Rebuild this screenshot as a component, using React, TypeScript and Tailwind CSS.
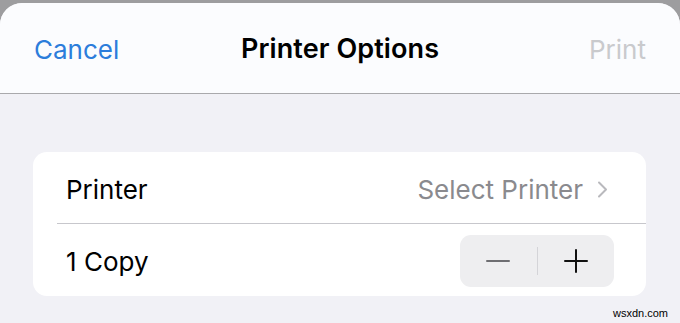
export default function App() {
  return (
    <div className="w-[680px] h-[323px] overflow-hidden bg-[#9d9d9f] pt-[3px]" style={{ fontFamily: "Inter, 'Liberation Sans', sans-serif" }}>
      <div className="h-full rounded-t-[22px] overflow-hidden bg-[#f1f1f6] flex flex-col">
        {/* nav bar */}
        <div className="h-[91px] shrink-0 bg-[#fbfcfe] border-b border-[#a9a9ac] flex items-center justify-between px-[34px] pt-[2px]">
          <span className="text-[26px] text-[#2c7ddb] w-[120px]">Cancel</span>
          <span className="text-[27px] font-semibold text-black tracking-[0.1px]">Printer Options</span>
          <span className="text-[26px] text-[#c9cacd] w-[120px] text-right">Print</span>
        </div>

        {/* body */}
        <div className="relative flex-1 pt-[58px] px-[33px]">
          <div className="bg-white rounded-[14px] w-[613px]">
            <div className="h-[71px] flex items-center justify-between pl-[33px] pr-[38px] pt-[3px]">
              <span className="text-[26px] text-black">Printer</span>
              <div className="flex items-center gap-[14px]">
                <span className="text-[26px] text-[#8a8a8e]">Select Printer</span>
                <svg width="11" height="17" viewBox="0 0 11 17" fill="none">
                  <path d="M2 1.5l7 7-7 7" stroke="#b9b9bd" strokeWidth="2" strokeLinecap="round" strokeLinejoin="round" />
                </svg>
              </div>
            </div>
            <div className="ml-[24px] h-px bg-[#c7c7cc]" />
            <div className="h-[72px] flex items-center justify-between pl-[33px] pr-[32px]">
              <span className="text-[26px] text-black mt-[3px]">1 Copy</span>
              <div className="w-[154px] h-[52px] rounded-[11px] bg-[#eeeef0] flex items-center mt-[2px]">
                <div className="flex-1 flex items-center justify-center">
                  <svg width="24" height="4" viewBox="0 0 24 4">
                    <rect x="0" y="1" width="24" height="2" rx="1" fill="#6e6e72" />
                  </svg>
                </div>
                <div className="w-px h-[28px] bg-[#d4d4d8]" />
                <div className="flex-1 flex items-center justify-center">
                  <svg width="24" height="24" viewBox="0 0 24 24">
                    <rect x="0" y="11" width="24" height="2" rx="1" fill="#111" />
                    <rect x="11" y="0" width="2" height="24" rx="1" fill="#111" />
                  </svg>
                </div>
              </div>
            </div>
          </div>
          <span className="absolute right-[12px] bottom-[2px] text-[11px] text-black" style={{ fontFamily: "'Liberation Sans', sans-serif" }}>wsxdn.com</span>
        </div>
      </div>
    </div>
  );
}
